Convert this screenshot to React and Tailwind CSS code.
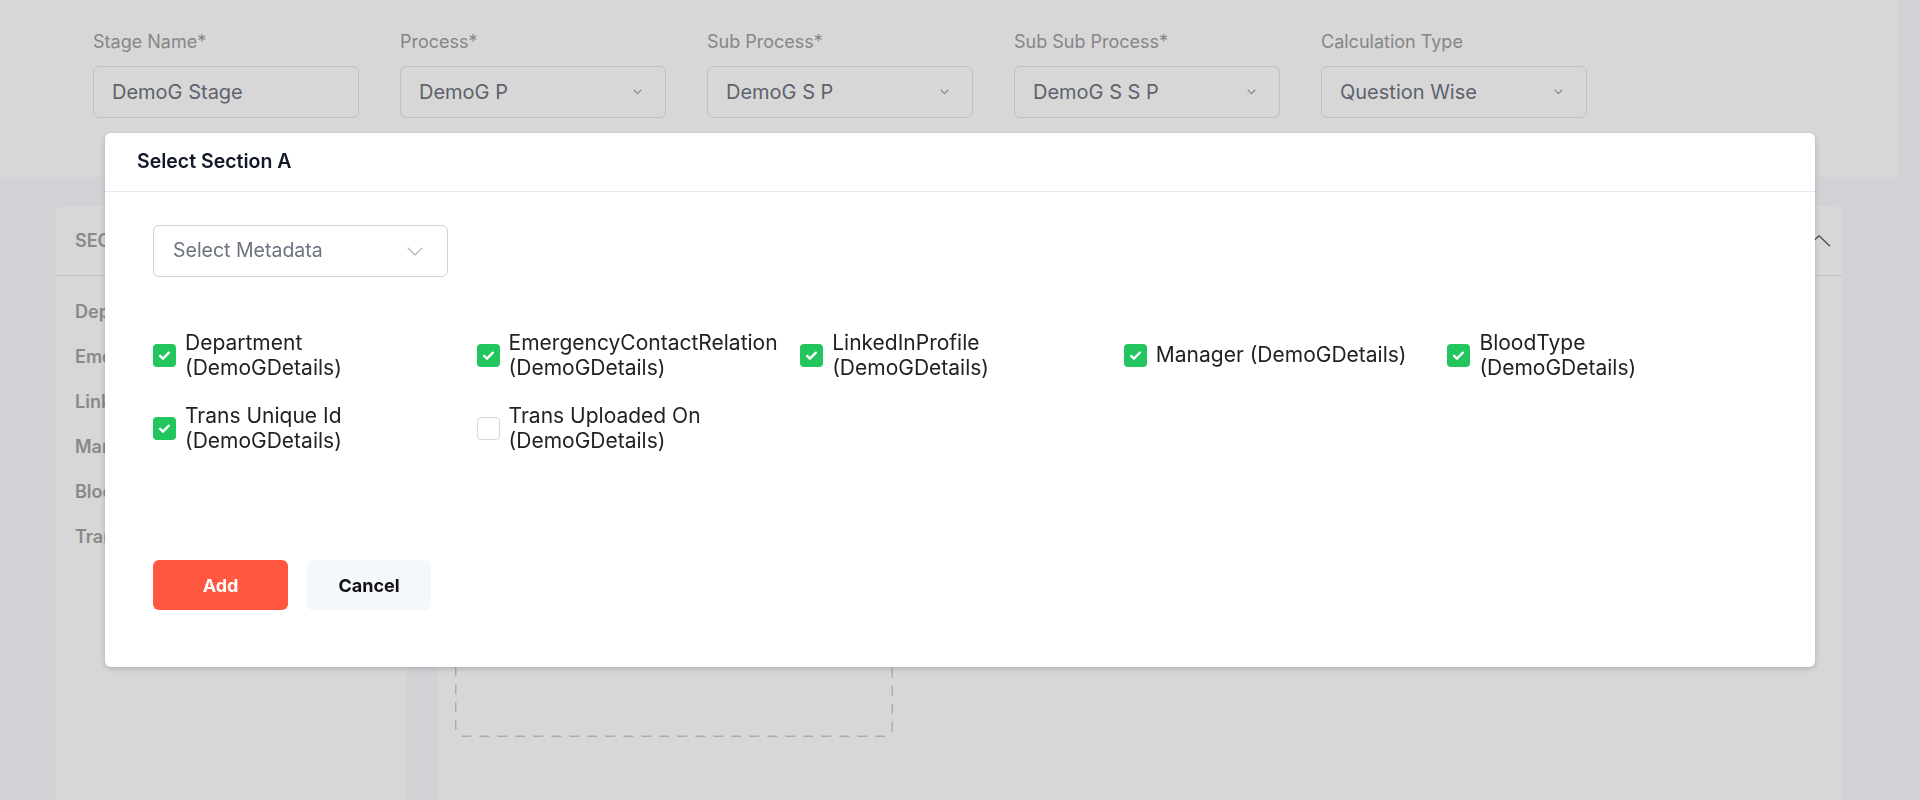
import React from "react";

const fields = [
  { label: "Stage Name*", value: "DemoG Stage", select: false },
  { label: "Process*", value: "DemoG P", select: true },
  { label: "Sub Process*", value: "DemoG S P", select: true },
  { label: "Sub Sub Process*", value: "DemoG S S P", select: true },
  { label: "Calculation Type", value: "Question Wise", select: true },
];

const sections = [
  "Department",
  "EmergencyContactRelation",
  "LinkedInProfile",
  "Manager",
  "BloodType",
  "Trans Unique Id",
];

const metadata = [
  { name: "Department", checked: true },
  { name: "EmergencyContactRelation", checked: true },
  { name: "LinkedInProfile", checked: true },
  { name: "Manager", checked: true },
  { name: "BloodType", checked: true },
  { name: "Trans Unique Id", checked: true },
  { name: "Trans Uploaded On", checked: false },
];

function SmallChevron() {
  return (
    <svg width="9" height="6" viewBox="0 0 9 6" fill="none">
      <polyline points="0.75,0.75 4.5,4.75 8.25,0.75" stroke="#9ca3af" strokeWidth="1.1" />
    </svg>
  );
}

function Checkbox({ checked }) {
  if (checked) {
    return (
      <span className="w-[23px] h-[23px] shrink-0 rounded-[4px] bg-[#22c55e] flex items-center justify-center">
        <svg width="15" height="15" viewBox="0 0 24 24" fill="none">
          <path d="M5 12.5l4.5 4.5L19 7.5" stroke="#ffffff" strokeWidth="3.8" strokeLinecap="round" strokeLinejoin="round" />
        </svg>
      </span>
    );
  }
  return <span className="w-[23px] h-[23px] shrink-0 rounded-[4px] bg-white border border-[#d4d8e0]" />;
}

export default function App() {
  return (
    <div className="relative h-screen overflow-hidden bg-[#f9fafe] font-['Inter',sans-serif]">
      {/* Underlying page */}
      <div className="w-[1898px] h-[177px] bg-white flex gap-[41px] pl-[93px] pt-[30px]">
        {fields.map((f) => (
          <div key={f.label} className="w-[266px] flex flex-col">
            <div className="text-[18px] leading-6 text-[#a0a0a0] mb-[12px]">{f.label}</div>
            <div className="h-[52px] rounded-md border border-[#e2e5ec] flex items-center justify-between pl-[18px] pr-[23px]">
              <span className="text-[20px] text-[#6f7582]">{f.value}</span>
              {f.select && <SmallChevron />}
            </div>
          </div>
        ))}
      </div>

      <div className="w-[1898px] flex gap-[30px] px-[56px] pt-[29px]">
        <div className="w-[351px] h-[700px] shrink-0 bg-white rounded-lg">
          <div className="h-[70px] border-b border-[#e8e9ee] flex items-center px-[19px]">
            <span className="text-[18px] font-semibold text-[#a3a3a3]">SECTIONS</span>
          </div>
          <div className="flex flex-col gap-[21px] pt-[24px] px-[19px]">
            {sections.map((s) => (
              <div key={s} className="text-[18px] leading-6 font-semibold text-[#a3a3a3]">{s}</div>
            ))}
          </div>
        </div>
        <div className="flex-1 h-[700px] bg-white rounded-lg">
          <div className="h-[70px] border-b border-[#e8e9ee] flex items-center justify-between pl-[18px] pr-[11px]">
            <span className="text-[18px] font-semibold text-[#374151]">Section A</span>
            <svg width="24" height="12" viewBox="0 0 24 12" fill="none">
              <polyline points="1,11.25 12,0.75 23,11.25" stroke="#5b5b5b" strokeWidth="1.3" />
            </svg>
          </div>
          <div className="pt-[24px] px-[18px]">
            <div className="relative w-[438px] h-[437px] flex items-center justify-center text-[16px] text-[#9ca3af]">
              <svg className="absolute inset-0" width="438" height="437" fill="none">
                <rect x="0.75" y="0.75" width="436.5" height="435.5" rx="8" stroke="#c9cdd6" strokeWidth="1.5" strokeDasharray="10 8" />
              </svg>
              Drop fields here
            </div>
          </div>
        </div>
      </div>

      {/* Overlay + modal */}
      <div className="fixed inset-0 bg-black/[0.157] flex justify-center items-start pt-[133px]">
        <div className="w-[1710px] bg-white rounded-md shadow-[0_2px_6px_rgba(0,0,0,0.18)]">
          <div className="h-[59px] border-b border-[#e7eaf0] pl-[32px] flex items-center">
            <span className="text-[19.5px] font-semibold text-[#111827]">Select Section A</span>
          </div>
          <div className="pt-[33px] px-[48px] pb-[57px]">
            <div className="w-[295px] h-[52px] rounded-md border border-[#cdd1da] flex items-center justify-between pl-[19px] pr-[24px]">
              <span className="text-[19.5px] text-[#6b7280]">Select Metadata</span>
              <svg width="16" height="9" viewBox="0 0 16 9" fill="none">
                <polyline points="0.75,0.75 8,8 15.25,0.75" stroke="#b8bcc5" strokeWidth="1.4" />
              </svg>
            </div>

            <div className="mt-[54px] grid grid-cols-5 gap-x-[4px] gap-y-[24px]">
              {metadata.map((m) => (
                <label key={m.name} className="flex items-center gap-[9px]">
                  <Checkbox checked={m.checked} />
                  <span className="max-w-[256px] text-[21px] leading-[24.5px] text-[#222222]">
                    {m.name} (DemoGDetails)
                  </span>
                </label>
              ))}
            </div>

            <div className="mt-[107px] flex gap-[19px]">
              <button className="w-[135px] h-[50px] rounded-md bg-[#ff5740] text-white text-[18px] font-bold">
                Add
              </button>
              <button className="w-[124px] h-[50px] rounded-md bg-[#f4f7fc] text-[#111111] text-[18px] font-bold">
                Cancel
              </button>
            </div>
          </div>
        </div>
      </div>
    </div>
  );
}
